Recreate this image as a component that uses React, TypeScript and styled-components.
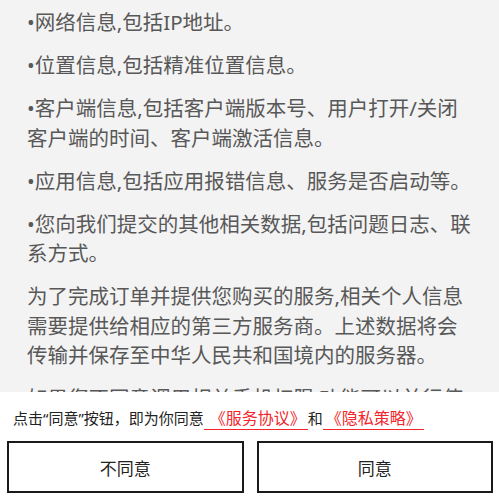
import React from 'react';
import styled, { createGlobalStyle } from 'styled-components';

const GlobalStyle = createGlobalStyle`
  html, body, #root {
    height: 100%;
  }
  body {
    margin: 0;
    background: #f3f3f3;
    font-family: "Noto Sans", "Noto Sans CJK SC", sans-serif;
  }
`;

const Page = styled.div`
  display: flex;
  flex-direction: column;
  height: 100vh;
  overflow: hidden;
`;

const Content = styled.div`
  flex: 1;
  overflow: hidden;
  padding: 8px 27px 0 27px;
  background: #f3f3f3;
`;

const Para = styled.p`
  margin: 0 0 13.5px;
  font-size: 20.5px;
  line-height: 29.5px;
  color: #585858;
`;

const Footer = styled.div`
  flex: none;
  background: #fff;
  padding: 15px 6px 7px 7px;
`;

const Notice = styled.div`
  padding-left: 6px;
  margin-bottom: 12px;
  font-size: 15px;
  line-height: 22px;
  color: #222;
  white-space: nowrap;
`;

const Link = styled.a<{ $lead: number }>`
  color: #f2262c;
  font-size: 16px;
  text-decoration: none;
  border-bottom: 1px solid #f2262c;
  padding: 0 2px 0 ${(p) => p.$lead}px;
`;

const Buttons = styled.div`
  display: grid;
  grid-template-columns: 1fr 1fr;
  gap: 13px;
`;

const Button = styled.button`
  height: 52px;
  background: #fff;
  border: 2px solid #1a1a1a;
  border-radius: 0;
  font-family: inherit;
  font-size: 17px;
  color: #222;
  cursor: pointer;
`;

const items = [
  '•网络信息,包括IP地址。',
  '•位置信息,包括精准位置信息。',
  '•客户端信息,包括客户端版本号、用户打开/关闭客户端的时间、客户端激活信息。',
  '•应用信息,包括应用报错信息、服务是否启动等。',
  '•您向我们提交的其他相关数据,包括问题日志、联系方式。',
  '为了完成订单并提供您购买的服务,相关个人信息需要提供给相应的第三方服务商。上述数据将会传输并保存至中华人民共和国境内的服务器。',
  '如果您不同意调用相关手机权限,功能可以并行使用。',
];

export default function App() {
  return (
    <Page>
      <GlobalStyle />
      <Content>
        {items.map((t, i) => (
          <Para key={i}>{t}</Para>
        ))}
      </Content>
      <Footer>
        <Notice>
          点击“同意”按钮，即为你同意
          <Link href="#" $lead={6}>《服务协议》</Link>和
          <Link href="#" $lead={3}>《隐私策略》</Link>
        </Notice>
        <Buttons>
          <Button>不同意</Button>
          <Button>同意</Button>
        </Buttons>
      </Footer>
    </Page>
  );
}
